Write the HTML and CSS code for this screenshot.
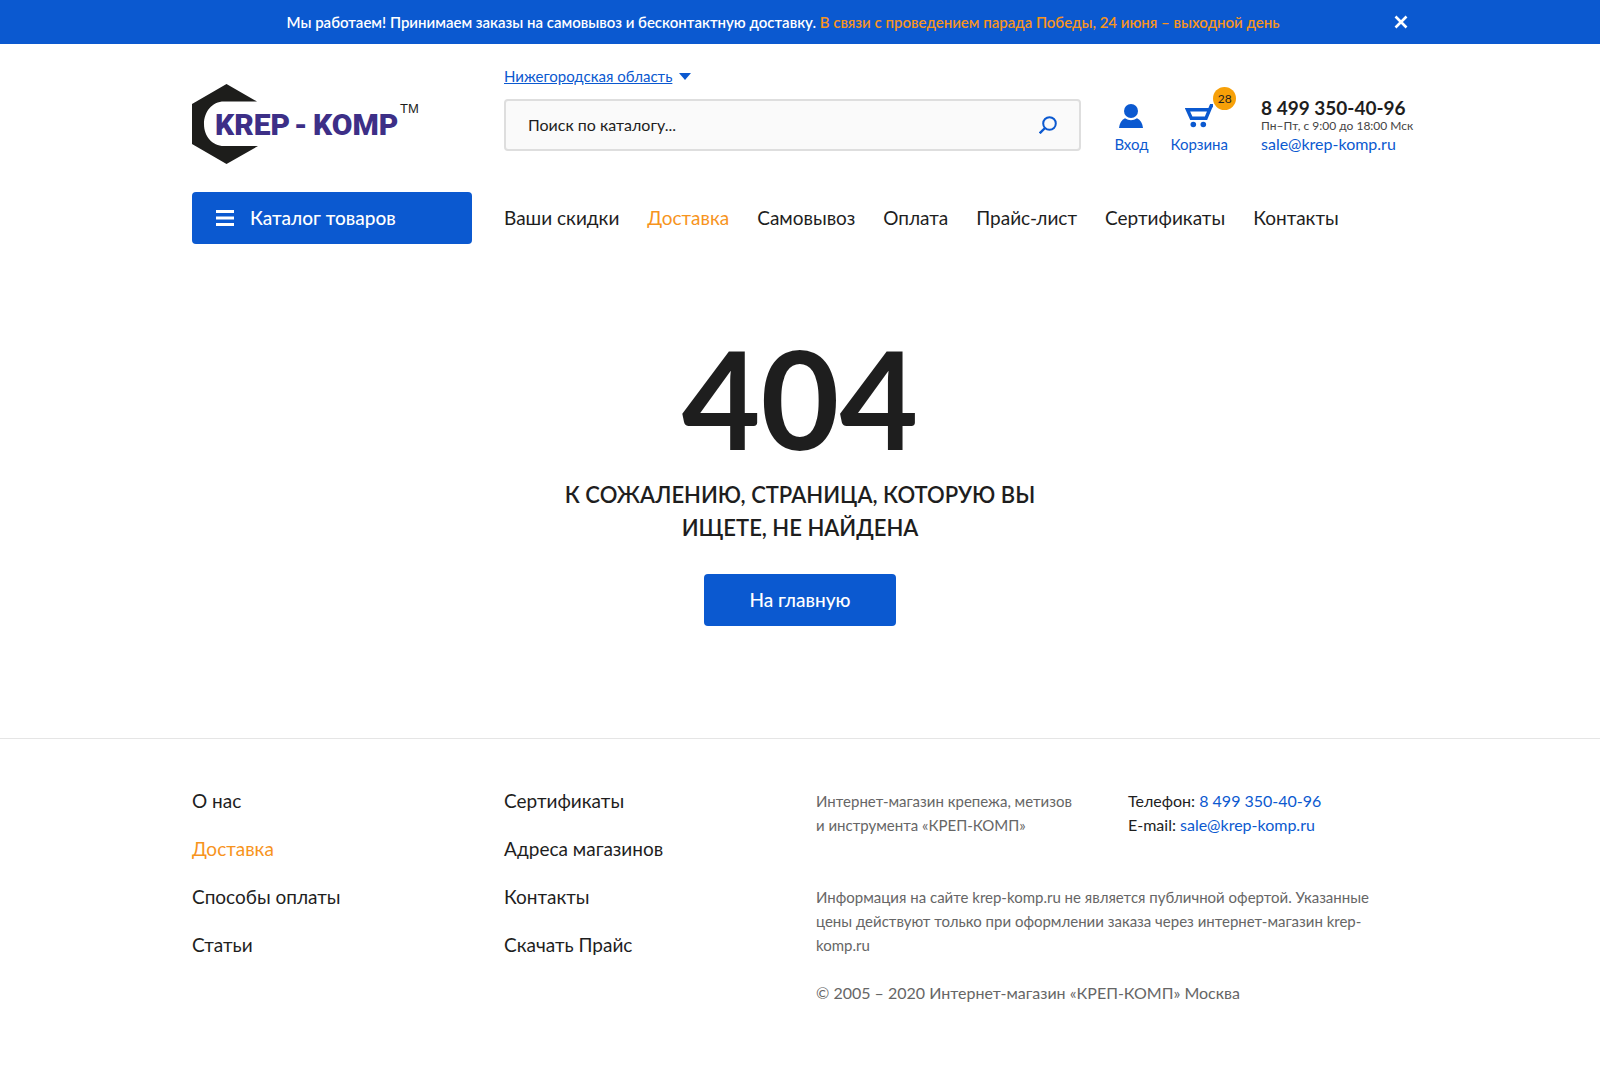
FILE: index.html
```html
<!DOCTYPE html>
<html lang="ru">
<head>
<meta charset="utf-8">
<meta name="viewport" content="width=device-width, initial-scale=1">
<title>404 — КРЕП-КОМП</title>
<link rel="stylesheet" href="styles.css">
</head>
<body>
<div class="notice">
  <div class="container notice-inner">
    <p class="notice-text">Мы работаем! Принимаем заказы на самовывоз и бесконтактную доставку. <span class="notice-accent">В связи с проведением парада Победы, 24 июня – выходной день</span></p>
    <button class="notice-close" type="button" aria-label="Закрыть">
      <svg width="14" height="14" viewBox="0 0 14 14"><path d="M1.500 1.500L12.500 12.500M12.500 1.500L1.500 12.500" stroke="currentColor" stroke-width="2.600"/></svg>
    </button>
  </div>
</div>

<header class="container header">
  <div class="header-top">
    <a class="logo" href="#" aria-label="KREP-KOMP">
      <svg width="230" height="80" viewBox="0 0 230 80">
        <path d="M0 20L34.500 0L65 17.500H32C20 17.500 12 28 12 40S20 62 32 62H66L34.500 80L0 60Z" fill="#1d1d1b"/>
        <g class="logo-word">
          <text x="23" y="51">KREP</text>
          <text x="102" y="51">-</text>
          <text x="121" y="51">KOMP</text>
        </g>
        <text class="logo-tm" x="208" y="29">TM</text>
      </svg>
    </a>
    <div class="search-col">
      <a class="region" href="#"><span class="region-name">Нижегородская область</span><svg width="12" height="7" viewBox="0 0 12 7"><path d="M0 0H12L6 7Z" fill="currentColor"/></svg></a>
      <form class="search">
        <input class="search-input" type="text" placeholder="Поиск по каталогу..." aria-label="Поиск по каталогу">
        <button class="search-button" type="submit" aria-label="Найти">
          <svg width="18" height="18" viewBox="0 0 18 18" fill="none" stroke="currentColor" stroke-width="2"><circle cx="10.500" cy="7.500" r="6.300"/><path d="M6 12L.7 17.300" stroke-width="2.400"/></svg>
        </button>
      </form>
    </div>
    <div class="header-side">
      <a class="action" href="#">
        <svg width="24" height="24" viewBox="0 0 24 24" fill="currentColor"><circle cx="12" cy="7" r="7"/><path d="M0 24C.5 19.500 2.500 16 6 14.300Q12 18.200 18 14.300C21.500 16 23.500 19.500 24 24Z"/></svg>
        <span>Вход</span>
      </a>
      <a class="action" href="#">
        <span class="cart-icon">
          <svg width="28" height="24" viewBox="0 0 28 24"><path d="M28 1.500H26.300L21 14.200H6.300L2.500 5.800H24" fill="none" stroke="currentColor" stroke-width="3.400"/><path d="M0 4H4V7Z" fill="currentColor"/><circle cx="8.300" cy="20.500" r="2.800" fill="currentColor"/><circle cx="18.300" cy="20.500" r="2.800" fill="currentColor"/></svg>
          <span class="badge">28</span>
        </span>
        <span>Корзина</span>
      </a>
      <div class="contacts">
        <a class="contacts-phone" href="tel:84993504096">8 499 350-40-96</a>
        <span class="contacts-hours">Пн–Пт, с 9:00 до 18:00 Мск</span>
        <a class="contacts-mail" href="mailto:sale@krep-komp.ru">sale@krep-komp.ru</a>
      </div>
    </div>
  </div>
  <div class="header-bottom">
    <button class="catalog" type="button">
      <svg width="18" height="16" viewBox="0 0 18 16" fill="currentColor"><path d="M0 0H18V3H0ZM0 6.500H18V9.500H0ZM0 13H18V16H0Z"/></svg>
      <span>Каталог товаров</span>
    </button>
    <nav class="nav">
      <a href="#">Ваши скидки</a>
      <a class="active" href="#">Доставка</a>
      <a href="#">Самовывоз</a>
      <a href="#">Оплата</a>
      <a href="#">Прайс-лист</a>
      <a href="#">Сертификаты</a>
      <a href="#">Контакты</a>
    </nav>
  </div>
</header>

<main class="error">
  <p class="error-code">404</p>
  <h1 class="error-title">К сожалению, страница, которую вы<br>ищете, не найдена</h1>
  <a class="error-button" href="#">На главную</a>
</main>

<footer class="footer">
  <div class="container footer-grid">
    <nav class="footer-nav">
      <a href="#">О нас</a>
      <a class="active" href="#">Доставка</a>
      <a href="#">Способы оплаты</a>
      <a href="#">Статьи</a>
    </nav>
    <nav class="footer-nav">
      <a href="#">Сертификаты</a>
      <a href="#">Адреса магазинов</a>
      <a href="#">Контакты</a>
      <a href="#">Скачать Прайс</a>
    </nav>
    <div class="footer-info">
      <div class="footer-row">
        <p>Интернет-магазин крепежа, метизов<br>и инструмента «КРЕП-КОМП»</p>
        <p class="footer-contacts">Телефон: <a href="tel:84993504096">8 499 350-40-96</a><br>E-mail: <a href="mailto:sale@krep-komp.ru">sale@krep-komp.ru</a></p>
      </div>
      <p class="footer-legal">Информация на сайте krep-komp.ru не является публичной офертой. Указанные цены действуют только при оформлении заказа через интернет-магазин krep-<wbr>komp.ru</p>
      <p class="footer-copyright">© 2005 – 2020 Интернет-магазин «КРЕП-КОМП» Москва</p>
    </div>
  </div>
</footer>
</body>
</html>
```

FILE: styles.css
```css
:root {
  --blue: #0b59d0;
  --orange: #f7941d;
  --ink: #1e1e1e;
  --grey: #666;
}

* {
  box-sizing: border-box;
}

body {
  margin: 0;
  font: 15px/24px Lato, "Open Sans", sans-serif;
  color: var(--ink);
  background: #fff;
}

p,
h1 {
  margin: 0;
}

a {
  color: inherit;
  text-decoration: none;
}

button {
  border: 0;
  padding: 0;
  font: inherit;
  cursor: pointer;
}

svg {
  display: block;
  flex: none;
}

.container {
  width: 100%;
  max-width: 1280px;
  margin: 0 auto;
  padding: 0 32px;
}

.notice {
  background: var(--blue);
  color: #fff;
}

.notice-inner {
  display: flex;
  align-items: center;
  min-height: 44px;
}

.notice-text {
  flex: 1;
  padding-right: 20px;
  text-align: center;
  font-weight: 600;
}

.notice-accent {
  color: var(--orange);
}

.notice-close {
  display: flex;
  width: 14px;
  background: none;
  color: inherit;
}

.header-top {
  display: flex;
  gap: 32px;
  padding-top: 20px;
}

.logo {
  flex: 0 0 280px;
  padding-top: 20px;
}

.logo-word {
  font: 900 30px Roboto, "Liberation Sans", sans-serif;
  fill: #3d2f87;
}

.logo-tm {
  font: 13px "Liberation Sans", sans-serif;
  fill: #1d1d1b;
}

.search-col {
  flex: 1;
}

.region {
  display: inline-flex;
  align-items: center;
  gap: 7px;
  color: var(--blue);
}

.region-name {
  text-decoration: underline;
}

.search {
  display: flex;
  height: 52px;
  margin-top: 11px;
  border: 2px solid #dedede;
  border-radius: 4px;
  background: #fafafa;
}

.search-input {
  flex: 1;
  min-width: 0;
  padding: 0 22px;
  border: 0;
  background: none;
  font: inherit;
  font-size: 16px;
  color: inherit;
}

.search-input::placeholder {
  color: var(--ink);
  opacity: 1;
}

.search-button {
  display: flex;
  align-items: center;
  padding: 0 22px;
  background: none;
  color: var(--blue);
}

.header-side {
  display: flex;
  gap: 20px;
  padding-top: 32px;
}

.action {
  display: flex;
  flex-direction: column;
  align-items: center;
  gap: 4px;
  padding: 8px 1px 0;
  color: var(--blue);
}

.cart-icon {
  position: relative;
}

.badge {
  position: absolute;
  top: -17px;
  right: -23px;
  width: 23px;
  border-radius: 50%;
  background: #f7a008;
  color: var(--ink);
  font-size: 12px;
  line-height: 23px;
  text-align: center;
}

.contacts {
  display: flex;
  flex-direction: column;
  width: 147px;
  margin-left: 12px;
  white-space: nowrap;
}

.contacts-phone {
  font-size: 19px;
  font-weight: 700;
}

.contacts-hours {
  font-size: 12px;
  line-height: 12px;
  color: #444;
}

.contacts-mail {
  font-size: 16px;
  color: var(--blue);
}

.header-bottom {
  display: flex;
  align-items: center;
  gap: 32px;
  padding-top: 28px;
}

.catalog {
  display: flex;
  flex: 0 0 280px;
  align-items: center;
  gap: 16px;
  height: 52px;
  padding: 0 24px;
  border-radius: 4px;
  background: var(--blue);
  color: #fff;
  font-size: 19px;
  font-weight: 500;
}

.nav {
  display: flex;
  gap: 28px;
  font-size: 19px;
}

.active {
  color: var(--orange);
}

.error {
  display: flex;
  flex-direction: column;
  align-items: center;
  padding: 86px 32px 112px;
  text-align: center;
}

.error-code {
  font-size: 136px;
  font-weight: 700;
  line-height: 136px;
}

.error-title {
  margin-top: 12px;
  font-size: 22px;
  font-weight: 600;
  line-height: 33px;
  text-transform: uppercase;
}

.error-button {
  min-width: 192px;
  margin-top: 30px;
  border-radius: 4px;
  background: var(--blue);
  color: #fff;
  font-size: 19px;
  font-weight: 500;
  line-height: 52px;
}

.footer {
  border-top: 1px solid #e5e5e5;
  padding: 50px 0 74px;
}

.footer-grid {
  display: grid;
  grid-template-columns: 280px 280px 1fr;
  gap: 32px;
}

.footer-nav {
  display: flex;
  flex-direction: column;
  gap: 24px;
  font-size: 19px;
}

.footer-info {
  display: flex;
  flex-direction: column;
  gap: 24px;
  color: var(--grey);
}

.footer-row {
  display: grid;
  grid-template-columns: 1fr 1fr;
  gap: 32px;
  padding-bottom: 24px;
  white-space: nowrap;
}

.footer-legal {
  max-width: 580px;
}

.footer-contacts,
.footer-copyright {
  font-size: 16px;
}

.footer-contacts {
  color: var(--ink);
}

.footer-contacts a {
  color: var(--blue);
}
```
